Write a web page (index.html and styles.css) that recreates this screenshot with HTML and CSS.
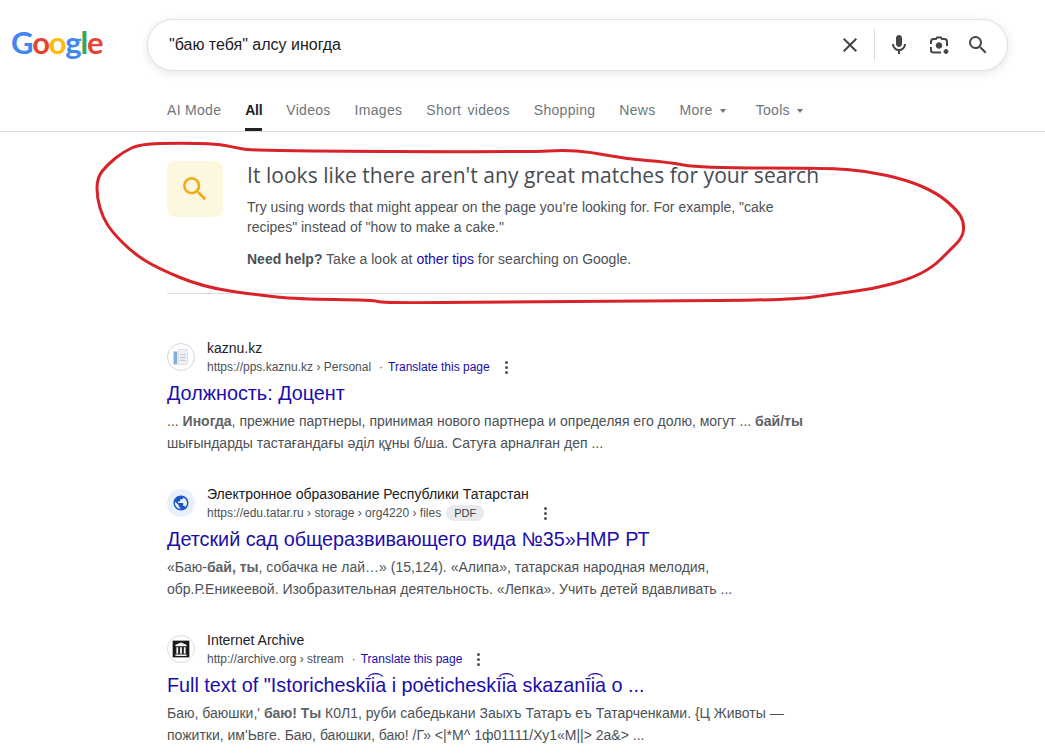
FILE: index.html
```html
<!DOCTYPE html>
<html lang="ru">
<head>
<meta charset="utf-8">
<title>"баю тебя" алсу иногда - Google Search</title>
<link rel="stylesheet" href="styles.css">
</head>
<body>
<header class="top">
  <div class="logo"><span class="blue">G</span><span class="red">o</span><span class="yellow">o</span><span class="blue">g</span><span class="green">l</span><span class="red">e</span></div>
  <div class="searchbox">
    <span class="query">"баю тебя" алсу иногда</span>
    <svg class="icon close" viewBox="0 0 24 24"><path d="M19 6.41L17.59 5 12 10.59 6.41 5 5 6.41 10.59 12 5 17.59 6.41 19 12 13.41 17.59 19 19 17.59 13.41 12z"/></svg>
    <span class="sep"></span>
    <svg class="icon mic" viewBox="0 0 24 24"><path d="M12 14c1.66 0 3-1.34 3-3V5c0-1.66-1.34-3-3-3S9 3.34 9 5v6c0 1.66 1.34 3 3 3z"/><path d="M17 11c0 2.76-2.24 5-5 5s-5-2.24-5-5H5c0 3.53 2.61 6.43 6 6.92V21h2v-3.08c3.39-.49 6-3.39 6-6.92h-2z"/></svg>
    <svg class="icon lens" viewBox="0 0 24 24"><path d="M4 11V8.500A2.500 2.500 0 0 1 6.500 6H9l1-1.500h4L15 6h2.500A2.500 2.500 0 0 1 20 8.500V13M4 14V17a2.500 2.500 0 0 0 2.500 2.500H14" fill="none" stroke-width="2"/><circle cx="12" cy="12.500" r="2.800"/><circle cx="19" cy="18.500" r="2"/></svg>
    <svg class="icon search" viewBox="0 0 24 24"><path d="M15.500 14h-.79l-.28-.27A6.471 6.471 0 0 0 16 9.500 6.500 6.500 0 1 0 9.500 16c1.610 0 3.090-.59 4.230-1.570l.27.28v.79l5 4.990L20.490 19l-4.990-5zm-6 0C7.010 14 5 11.990 5 9.500S7.010 5 9.500 5 14 7.010 14 9.500 11.990 14 9.500 14z"/></svg>
  </div>
</header>

<nav class="tabs">
  <a class="tab">AI Mode</a>
  <a class="tab tab-active">All</a>
  <a class="tab">Videos</a>
  <a class="tab">Images</a>
  <a class="tab tab-wide">Short videos</a>
  <a class="tab">Shopping</a>
  <a class="tab">News</a>
  <a class="tab">More<span class="caret"></span></a>
  <a class="tab tab-tools">Tools<span class="caret"></span></a>
</nav>

<main class="content">
  <section class="notice">
    <div class="notice-icon">
      <svg viewBox="0 0 24 24"><path d="M15.500 14h-.79l-.28-.27A6.471 6.471 0 0 0 16 9.500 6.500 6.500 0 1 0 9.500 16c1.610 0 3.090-.59 4.230-1.570l.27.28v.79l5 4.990L20.490 19l-4.990-5zm-6 0C7.010 14 5 11.990 5 9.500S7.010 5 9.500 5 14 7.010 14 9.500 11.990 14 9.500 14z"/></svg>
    </div>
    <div class="notice-body">
      <h2>It looks like there aren't any great matches for your search</h2>
      <p class="tip">Try using words that might appear on the page you’re looking for. For example, "cake<br>recipes" instead of "how to make a cake."</p>
      <p class="help"><b>Need help?</b> Take a look at <a>other tips</a> for searching on Google.</p>
    </div>
  </section>

  <article class="result">
    <div class="source">
      <span class="favicon fav-kaznu">
        <svg viewBox="0 0 28 28"><rect x="6" y="8" width="4" height="14" fill="#7fb0da"/><rect x="11" y="6" width="10" height="16" fill="#eef1f4" stroke="#c9d0d6" stroke-width=".6"/><rect x="13" y="11" width="6" height="1" fill="#b9c2ca"/><rect x="13" y="14" width="6" height="1" fill="#b9c2ca"/><rect x="13" y="17" width="6" height="1" fill="#b9c2ca"/></svg>
      </span>
      <div class="source-text">
        <div class="site">kaznu.kz</div>
        <div class="url"><span>https://pps.kaznu.kz</span><span class="crumb"> › Personal</span><span class="dot">·</span><a class="translate">Translate this page</a><span class="dots"><i></i><i></i><i></i></span></div>
      </div>
    </div>
    <h3>Должность: Доцент</h3>
    <p class="snippet">... <b>Иногда</b>, прежние партнеры, принимая нового партнера и определяя его долю, могут ... <b>бай/ты</b><br>шығындарды тастағандағы әділ құны б/ша. Сатуға арналған деп ...</p>
  </article>

  <article class="result">
    <div class="source">
      <span class="favicon fav-globe">
        <svg viewBox="0 0 24 24"><path d="M12 2C6.480 2 2 6.480 2 12s4.480 10 10 10 10-4.480 10-10S17.520 2 12 2zm-1 17.930c-3.950-.49-7-3.850-7-7.930 0-.62.080-1.210.21-1.790L9 15v1c0 1.100.9 2 2 2v1.930zm6.900-2.540c-.26-.81-1-1.390-1.900-1.390h-1v-3c0-.55-.45-1-1-1H8v-2h2c.55 0 1-.45 1-1V7h2c1.100 0 2-.9 2-2v-.41c2.930 1.190 5 4.060 5 7.410 0 2.080-.8 3.970-2.100 5.390z"/></svg>
      </span>
      <div class="source-text">
        <div class="site">Электронное образование Республики Татарстан</div>
        <div class="url"><span>https://edu.tatar.ru</span><span class="crumb"> › storage › org4220 › files</span><span class="pdf">PDF</span><span class="dots dots-pdf"><i></i><i></i><i></i></span></div>
      </div>
    </div>
    <h3>Детский сад общеразвивающего вида №35»НМР РТ</h3>
    <p class="snippet">«Баю-<b>бай, ты</b>, собачка не лай…» (15,124). «Алипа», татарская народная мелодия,<br>обр.Р.Еникеевой. Изобразительная деятельность. «Лепка». Учить детей вдавливать ...</p>
  </article>

  <article class="result">
    <div class="source">
      <span class="favicon fav-archive">
        <svg viewBox="0 0 28 28"><rect x="5" y="5" width="18" height="18" fill="#1a1a1a"/><path d="M8 9.500L14 7l6 2.500V11H8zM9 12h2v7H9zM13 12h2v7h-2zM17 12h2v7h-2zM8 20h12v1.500H8z" fill="#f2f2f2"/></svg>
      </span>
      <div class="source-text">
        <div class="site">Internet Archive</div>
        <div class="url"><span>http://archive.org</span><span class="crumb"> › stream</span><span class="dot">·</span><a class="translate">Translate this page</a><span class="dots"><i></i><i></i><i></i></span></div>
      </div>
    </div>
    <h3>Full text of "Istoricheskīi͡a i poėticheskīi͡a skazanīi͡a o ...</h3>
    <p class="snippet">Баю, баюшки,' <b>баю!</b> <b>Ты</b> К0Л1, руби сабедькани Заыхъ Татаръ еъ Татарченками. {Ц Животы —<br>пожитки, им'Ьвге. Баю, баюшки, баю! /Г» &lt;|*М^ 1ф01111/Ху1«М||&gt; 2а&amp;&gt; ...</p>
  </article>
</main>

<svg class="scribble" viewBox="0 0 1045 755" aria-hidden="true">
  <path d="M243 149 Q233 147 225 145.500 Q217 144 198.500 143.500 Q180 143 160 143.500 Q140 144 131.500 148 Q123 152 115 158.500 Q107 165 102 171.500 Q97 178 97 188 Q97 198 100 208 Q103 218 108 225.500 Q113 233 123 243 Q133 253 145 260.500 Q157 268 180 277.500 Q203 287 230 291 Q257 295 277 297 Q297 299 335 299.500 Q373 300 378 301.500 Q383 303 441.500 302.500 Q500 302 573.500 301.500 Q647 301 720 300.500 Q793 300 813 297 Q833 294 853 291.500 Q873 289 891.500 284 Q910 279 921.500 273 Q933 267 941.500 258.500 Q950 250 956.500 243.500 Q963 237 963.500 229.500 Q964 222 960.500 216 Q957 210 947 201.500 Q937 193 922 186.500 Q907 180 887 175.500 Q867 171 847 169.500 Q827 168 763.500 168 Q700 168 683.500 165 Q667 162 647 160.500 Q627 159 608.500 155.500 Q590 152 576.500 151 Q563 150 548 151 Q533 152 393 151.500 Q253 151 243 149 Z"/>
</svg>
</body>
</html>
```
FILE: styles.css
```css
* { box-sizing: border-box; }
html, body { margin: 0; padding: 0; height: 755px; overflow: hidden; }
body { background: #fff; font-family: "Liberation Sans", Arial, sans-serif; color: #4d5156; position: relative; }

.top { display: flex; align-items: center; padding: 19px 37px 0 11px; }
.logo { width: 136px; height: 52px; font-family: "Lato", sans-serif; font-size: 31px; line-height: 46px; letter-spacing: -1.2px; font-weight: 700; }
.blue { color: #4285f4; }
.red { color: #ea4335; }
.yellow { color: #fbbc05; }
.green { color: #34a853; }

.searchbox { flex: 1; height: 52px; display: flex; align-items: center; border: 1px solid #dfe1e5; border-radius: 26px; padding: 0 17px 0 21px; box-shadow: 0 2px 8px rgba(32,33,36,.12); background: #fff; }
.query { flex: 1; font-size: 16px; color: #202124; }
.icon { width: 24px; height: 24px; fill: #444746; flex: none; }
.sep { width: 1px; height: 32px; background: #dadce0; margin: 0 12px; }
.lens { margin-left: 16px; stroke: #444746; }
.search { margin-left: 15px; }

.tabs { display: flex; gap: 24px; height: 43px; margin-top: 18px; padding-left: 167px; border-bottom: 1px solid #dadce0; }
.tab { font-size: 14px; line-height: 42px; height: 42px; color: #70757a; letter-spacing: .3px; }
.tab-active { color: #202124; font-weight: 700; letter-spacing: -.3px; border-bottom: 3px solid #202124; }
.tab-wide { word-spacing: 2px; }
.tab-tools { margin-left: 6px; }
.caret { display: inline-block; margin-left: 7px; vertical-align: 2px; border-top: 4px solid #70757a; border-left: 3.5px solid transparent; border-right: 3.5px solid transparent; }

.content { width: 652px; margin-left: 167px; padding-top: 29px; }
.notice { display: flex; gap: 24px; padding-bottom: 24px; border-bottom: 1px solid #dadce0; margin-bottom: 44px; }
.notice-icon { width: 56px; height: 56px; flex: none; background: #fef7e0; border-radius: 8px; display: flex; align-items: center; justify-content: center; }
.notice-icon svg { width: 32px; height: 32px; fill: #f2ab16; }
.notice-body h2 { margin: 0; font-family: "Open Sans", sans-serif; font-weight: 400; font-size: 21px; line-height: 28px; letter-spacing: .04px; color: #474c52; white-space: nowrap; }
.tip, .help { margin: 0; font-size: 14px; line-height: 20px; color: #4d5156; }
.tip { margin-top: 8px; }
.help { margin-top: 12px; }
.help a { color: #1a0dab; }
.help b { font-weight: 700; }

.result { margin-bottom: 30px; }
.source { display: flex; align-items: center; gap: 12px; }
.favicon { width: 28px; height: 28px; border-radius: 50%; flex: none; display: flex; align-items: center; justify-content: center; overflow: hidden; }
.favicon svg { width: 100%; height: 100%; display: block; }
.fav-kaznu { background: #fff; border: 1px solid #d2d6da; }
.fav-globe { background: #e8f0fe; }
.fav-globe svg { width: 18px; height: 18px; fill: #1a56c4; }
.fav-archive { background: #fff; border: 1px solid #dadce0; }
.site { font-size: 14px; line-height: 20px; color: #202124; white-space: nowrap; }
.url { font-size: 12px; line-height: 18px; color: #4d5156; display: flex; align-items: center; white-space: pre; }
.dot { margin: 0 5px 0 8px; }
.translate { color: #1a0dab; }
.dots { display: inline-flex; flex-direction: column; gap: 2px; margin-left: 15px; }
.dots i { width: 3px; height: 3px; border-radius: 50%; background: #4d5156; display: block; }
.pdf { margin-left: 5px; background: #e8eaed; color: #3c4043; font-size: 11px; line-height: 16px; padding: 0 8px; border-radius: 8px; }
.dots-pdf { margin-left: 60px; }
.result h3 { margin: 4px 0 0; font-size: 19.8px; line-height: 26px; font-weight: 400; color: #1a0dab; white-space: nowrap; }
.snippet { margin: 4px 0 0; font-size: 14px; line-height: 22px; color: #4d5156; white-space: nowrap; }
.snippet b { color: #5f6368; }

.scribble { position: absolute; left: 0; top: 0; width: 1045px; height: 755px; pointer-events: none; }
.scribble path { fill: none; stroke: #d8232a; stroke-width: 3; stroke-linejoin: round; }
```
